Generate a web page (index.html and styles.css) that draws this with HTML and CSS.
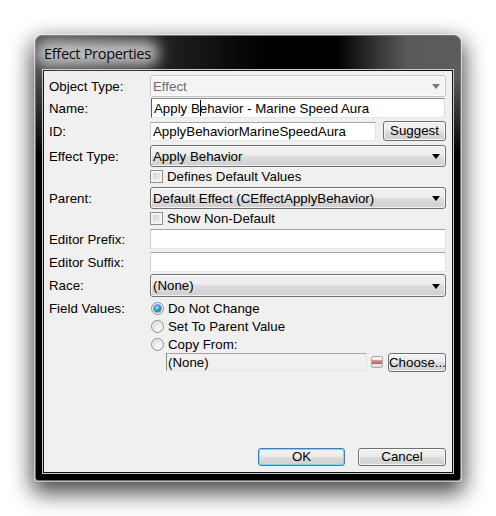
FILE: index.html
```html
<!DOCTYPE html>
<html>
<head>
<meta charset="utf-8">
<link rel="stylesheet" href="styles.css">
</head>
<body>
<div class="stage">
  <div class="window">
    <div class="titlebar"><span class="title">Effect Properties</span></div>
    <div class="client">
      <div class="form">
        <div class="row r1">
          <span class="label">Object Type:</span>
          <div class="combo disabled"><span class="val">Effect</span><i class="arrow"></i></div>
        </div>
        <div class="row r2">
          <span class="label">Name:</span>
          <div class="field focused">Apply B<span class="caret"></span>ehavior - Marine Speed Aura</div>
        </div>
        <div class="row r3">
          <span class="label">ID:</span>
          <div class="field id">ApplyBehaviorMarineSpeedAura</div>
          <button class="btn suggest">Suggest</button>
        </div>
        <div class="row r4">
          <span class="label">Effect Type:</span>
          <div class="combo"><span class="val">Apply Behavior</span><i class="arrow"></i></div>
        </div>
        <div class="row r5 check-row">
          <span class="label"></span>
          <span class="checkbox"></span><span class="ctext">Defines Default Values</span>
        </div>
        <div class="row r6">
          <span class="label">Parent:</span>
          <div class="combo"><span class="val">Default Effect (CEffectApplyBehavior)</span><i class="arrow"></i></div>
        </div>
        <div class="row r7 check-row">
          <span class="label"></span>
          <span class="checkbox"></span><span class="ctext">Show Non-Default</span>
        </div>
        <div class="row r8">
          <span class="label">Editor Prefix:</span>
          <div class="field"></div>
        </div>
        <div class="row r9">
          <span class="label">Editor Suffix:</span>
          <div class="field"></div>
        </div>
        <div class="row r10">
          <span class="label">Race:</span>
          <div class="combo"><span class="val">(None)</span><i class="arrow"></i></div>
        </div>
        <div class="row radio-row r11">
          <span class="label">Field Values:</span>
          <span class="radio checked"><i></i></span><span class="ctext">Do Not Change</span>
        </div>
        <div class="row radio-row">
          <span class="label"></span>
          <span class="radio"></span><span class="ctext">Set To Parent Value</span>
        </div>
        <div class="row radio-row">
          <span class="label"></span>
          <span class="radio"></span><span class="ctext">Copy From:</span>
        </div>
        <div class="row r14">
          <span class="label"></span>
          <div class="field copy">(None)</div>
          <span class="minus"><i></i></span>
          <button class="btn choose">Choose...</button>
        </div>
      </div>
      <div class="buttons">
        <button class="btn default ok">OK</button>
        <button class="btn cancel">Cancel</button>
      </div>
    </div>
  </div>
</div>
</body>
</html>
```

FILE: styles.css
```css
html, body {
  margin: 0;
  padding: 0;
  background: #ffffff;
}
body {
  font-family: "Liberation Sans", Arial, sans-serif;
  font-size: 13.3px;
  color: #000;
  min-height: 516px;
}
.stage {
  padding: 35px 0 35px 35px;
}
.window {
  width: 426px;
  height: 446px;
  box-sizing: border-box;
  border: 1px solid #6e6e6e;
  border-radius: 7px 7px 3px 3px;
  padding: 0 7px 7px 7px;
  display: flex;
  flex-direction: column;
  background:
    linear-gradient(to bottom, rgba(0,0,0,0) 40px, #000 120px),
    linear-gradient(90deg, #4e4e4e 0px, #1a1a1a 150px, #000 230px, #000 300px, #3a3a3a 345px, #5a5a5a 372px, #5c5c5c 100%);
  box-shadow: 0 0 0 1px rgba(255,255,255,0.55), 0 9px 22px 3px rgba(0,0,0,0.72);
}
.titlebar {
  height: 34px;
  display: flex;
  align-items: center;
  padding: 0 0 1px 1px;
  box-sizing: border-box;
}
.title {
  position: relative;
  z-index: 0;
  font-family: "Open Sans", "Noto Sans", sans-serif;
  font-size: 14.6px;
  letter-spacing: -0.35px;
  color: #0a0a0a;
}
.title::before {
  content: "";
  position: absolute;
  left: -8px;
  right: -8px;
  top: -3px;
  bottom: -3px;
  background: rgba(225,225,225,0.78);
  border-radius: 12px;
  filter: blur(7px);
  z-index: -1;
}
.client {
  flex: 1;
  background: #f0f0f0;
  border: 1px solid #111;
  box-shadow: 0 0 0 1px #c9c9c9;
  display: flex;
  flex-direction: column;
  padding: 4px 6px 6px 5px;
}
.form {
  display: flex;
  flex-direction: column;
}
.row {
  display: flex;
  align-items: center;
}
.label {
  width: 101px;
  flex: none;
  white-space: nowrap;
}
.r1 { height: 22px; }
.r2 { height: 20px; margin-top: 1px; }
.r3 { height: 20px; margin-top: 3px; }
.r4 { height: 22px; margin-top: 4px; }
.r5 { height: 19px; }
.r6 { height: 22px; margin-top: 1px; }
.r7 { height: 19px; }
.r8 { height: 20px; margin-top: 1px; }
.r9 { height: 20px; margin-top: 3px; }
.r10 { height: 23px; margin-top: 2px; }
.r11 { margin-top: 2px; }
.radio-row { height: 18px; }
.r14 { height: 19px; align-items: flex-start; }

.combo {
  flex: 1;
  height: 100%;
  box-sizing: border-box;
  border: 1px solid #707070;
  border-radius: 3px;
  background: linear-gradient(#f2f2f2 0%, #ebebeb 50%, #dddddd 50%, #cfcfcf 100%);
  box-shadow: inset 0 0 0 1px rgba(255,255,255,0.7);
  display: flex;
  align-items: center;
  padding: 0 5px 0 2px;
}
.combo .val {
  flex: 1;
  white-space: nowrap;
}
.arrow {
  width: 0;
  height: 0;
  border-left: 4.5px solid transparent;
  border-right: 4.5px solid transparent;
  border-top: 5px solid #000;
  margin-top: 1px;
}
.combo.disabled {
  border-color: #c4c4c4;
  background: #f4f4f4;
  box-shadow: inset 0 0 0 1px #fbfbfb;
  color: #6d6d6d;
}
.combo.disabled .arrow {
  border-top-color: #7a7a7a;
}

.field {
  flex: 1;
  height: 100%;
  box-sizing: border-box;
  background: #fff;
  border: 1px solid;
  border-color: #a5a5a5 #e1e1e1 #e8e8e8 #cfcfcf;
  padding: 0 2px;
  display: flex;
  align-items: center;
  white-space: nowrap;
  overflow: hidden;
}
.field.focused {
  border-color: #8a8a8a #dcdcdc #e6e6e6 #5a5a5a;
  margin-left: 1px;
  margin-right: 1px;
}
.caret {
  display: inline-block;
  width: 0;
  height: 16px;
  border-left: 1px solid #000;
  margin-right: -1px;
}
.field.id {
  flex: none;
  width: 226px;
  height: 19px;
}
.field.copy {
  flex: none;
  width: 201px;
  height: 18px;
  margin-left: 16px;
  background: #f0f0f0;
  border-color: #a6a6a6 #e4e4e4 #e4e4e4 #8c8c8c;
  padding: 0 1px;
}

.btn {
  font-family: inherit;
  font-size: inherit;
  color: #000;
  border: 1px solid #707070;
  border-radius: 3px;
  background: linear-gradient(#f2f2f2 0%, #ebebeb 50%, #dddddd 50%, #cfcfcf 100%);
  box-shadow: inset 0 0 0 1px rgba(255,255,255,0.75);
  padding: 0;
  margin: 0;
  line-height: 1;
  white-space: nowrap;
}
.suggest {
  width: 63px;
  height: 20px;
  margin-left: 7px;
}
.choose {
  width: 58px;
  height: 19px;
  margin-left: 5px;
  overflow: visible;
  text-align: center;
}
.minus {
  width: 12px;
  height: 12px;
  box-sizing: border-box;
  margin-left: 4px;
  margin-top: 3px;
  border: 1px solid #a8a8a8;
  border-radius: 2px;
  background: linear-gradient(#f6f6f6, #e0e0e0);
  display: flex;
  align-items: center;
  justify-content: center;
}
.minus i {
  display: block;
  width: 10px;
  height: 4px;
  background: linear-gradient(#e59a9a, #c85454);
}

.check-row .checkbox,
.radio-row .radio {
  margin-right: 4px;
}
.checkbox {
  width: 13px;
  height: 13px;
  box-sizing: border-box;
  flex: none;
  border: 1px solid #8e8f8f;
  background: linear-gradient(135deg, #c4c6c9 0%, #e6e7e8 60%, #f6f6f6 100%);
  box-shadow: inset 0 0 0 2px #f4f4f4;
}
.radio {
  width: 13px;
  height: 13px;
  box-sizing: border-box;
  flex: none;
  border-radius: 50%;
  border: 1px solid #8f9090;
  background: radial-gradient(circle at 65% 70%, #ffffff 0%, #e9e9e9 45%, #c8c8c8 100%);
  box-shadow: inset 0 0 0 1px #f4f4f4;
  margin-left: 1px;
  display: flex;
  align-items: center;
  justify-content: center;
}
.radio.checked i {
  display: block;
  width: 7px;
  height: 7px;
  border-radius: 50%;
  background: radial-gradient(circle at 40% 35%, #9fe4ff 0%, #36a0dd 40%, #145a8f 100%);
  box-shadow: 0 0 0 0.5px #173e5c;
}
.ctext {
  white-space: nowrap;
}

.buttons {
  margin-top: auto;
  display: flex;
  justify-content: flex-end;
  gap: 13px;
}
.ok, .cancel {
  height: 18px;
}
.ok {
  width: 87px;
}
.cancel {
  width: 88px;
}
.btn.default {
  border-color: #3c7fb1;
  box-shadow: inset 0 0 0 1px #7fd8f7;
}
```
